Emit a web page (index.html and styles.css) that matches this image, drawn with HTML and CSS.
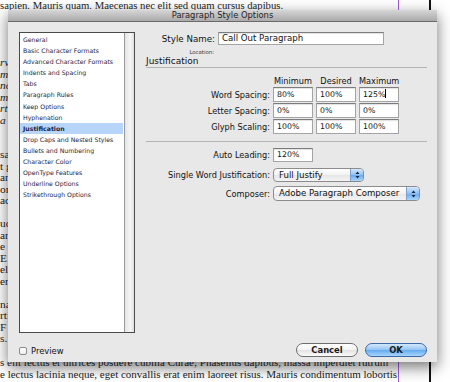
FILE: index.html
```html
<!DOCTYPE html>
<html lang="en">
<head>
    <meta charset="UTF-8">
    <meta name="viewport" content="width=device-width, initial-scale=1.0">
    <title>Paragraph Style Options</title>
    <link rel="stylesheet" href="styles.css">
</head>
<body>
    <div class="page">
        <div class="frame">
            <p class="line first">sapien. Mauris quam. Maecenas nec elit sed quam cursus dapibus.</p>
            <div class="middle">
                <p class="line gap"></p>
                <p class="line gap"></p>
                <p class="line gap"></p>
                <p class="line italic">rv</p>
                <p class="line italic">m,</p>
                <p class="line italic">nc</p>
                <p class="line italic">mi</p>
                <p class="line italic">rt</p>
                <p class="line italic">a l</p>
                <p class="line gap"></p>
                <p class="line gap"></p>
                <p class="line">sa</p>
                <p class="line">t g</p>
                <p class="line">ar</p>
                <p class="line">on</p>
                <p class="line">ac</p>
                <p class="line gap"></p>
                <p class="line">ud</p>
                <p class="line">ar</p>
                <p class="line">e</p>
                <p class="line">E</p>
                <p class="line">el</p>
                <p class="line">en</p>
                <p class="line gap"></p>
                <p class="line">na</p>
                <p class="line">rti</p>
                <p class="line">F</p>
                <p class="line">s.</p>
            </div>
            <div class="bottom">
                <p class="line">s elit lectus et ultrices posuere cubilia Curae; Phasellus dapibus, massa imperdiet rutrum</p>
                <p class="line">e lectus lacinia neque, eget convallis erat enim laoreet risus. Mauris condimentum lobortis</p>
            </div>
        </div>
    </div>

    <div class="dialog">
        <div class="titlebar">Paragraph Style Options</div>
        <div class="dialog-body">
            <div class="list-box">
                <ul class="list">
                    <li>General</li>
                    <li>Basic Character Formats</li>
                    <li>Advanced Character Formats</li>
                    <li>Indents and Spacing</li>
                    <li>Tabs</li>
                    <li>Paragraph Rules</li>
                    <li>Keep Options</li>
                    <li>Hyphenation</li>
                    <li class="selected">Justification</li>
                    <li>Drop Caps and Nested Styles</li>
                    <li>Bullets and Numbering</li>
                    <li>Character Color</li>
                    <li>OpenType Features</li>
                    <li>Underline Options</li>
                    <li>Strikethrough Options</li>
                </ul>
                <div class="scroll-track"></div>
            </div>

            <div class="panel">
                <div class="name-row">
                    <label class="name-label">Style Name:</label>
                    <div class="field name-field">Call Out Paragraph</div>
                </div>
                <div class="location">Location:</div>
                <div class="section-title">Justification</div>

                <div class="grid-row header-row">
                    <span class="row-label"></span>
                    <span class="col-head">Minimum</span>
                    <span class="col-head">Desired</span>
                    <span class="col-head">Maximum</span>
                </div>
                <div class="grid-row">
                    <label class="row-label">Word Spacing:</label>
                    <div class="field cell">80%</div>
                    <div class="field cell">100%</div>
                    <div class="field cell">125%<span class="caret"></span></div>
                </div>
                <div class="grid-row">
                    <label class="row-label">Letter Spacing:</label>
                    <div class="field cell">0%</div>
                    <div class="field cell">0%</div>
                    <div class="field cell">0%</div>
                </div>
                <div class="grid-row">
                    <label class="row-label">Glyph Scaling:</label>
                    <div class="field cell">100%</div>
                    <div class="field cell">100%</div>
                    <div class="field cell">100%</div>
                </div>

                <div class="divider"></div>

                <div class="grid-row leading-row">
                    <label class="row-label">Auto Leading:</label>
                    <div class="field cell">120%</div>
                </div>
                <div class="grid-row popup-row">
                    <label class="row-label">Single Word Justification:</label>
                    <div class="popup popup-short">
                        <span class="popup-text">Full Justify</span>
                        <span class="stepper">
                            <svg width="5" height="8" viewBox="0 0 5 8"><path d="M2.5 0.5 L4.5 3 L0.5 3 Z M0.5 5 L4.5 5 L2.5 7.5 Z" fill="#1b2a44"/></svg>
                        </span>
                    </div>
                </div>
                <div class="grid-row popup-row composer-row">
                    <label class="row-label">Composer:</label>
                    <div class="popup popup-long">
                        <span class="popup-text">Adobe Paragraph Composer</span>
                        <span class="stepper">
                            <svg width="5" height="8" viewBox="0 0 5 8"><path d="M2.5 0.5 L4.5 3 L0.5 3 Z M0.5 5 L4.5 5 L2.5 7.5 Z" fill="#1b2a44"/></svg>
                        </span>
                    </div>
                </div>
            </div>
        </div>

        <div class="dialog-footer">
            <label class="preview">
                <span class="checkbox"></span>
                Preview
            </label>
            <div class="buttons">
                <button class="btn cancel">Cancel</button>
                <button class="btn ok">OK</button>
            </div>
        </div>
    </div>
</body>
</html>
```

FILE: styles.css
```css
/* page behind the dialog */
body {
    margin: 0;
    width: 450px;
    height: 382px;
    overflow: hidden;
    background: #fff;
    position: relative;
    font-family: "DejaVu Sans", "Liberation Sans", sans-serif;
}
.page {
    width: 429px;
    height: 382px;
    border-right: 2px solid #111;
}
.frame {
    width: 398px;
    height: 382px;
    border-right: 1px solid #a55cdc;
    display: flex;
    flex-direction: column;
    justify-content: space-between;
    overflow: hidden;
}
.line {
    margin: 0;
    height: 11.5px;
    font-family: "Liberation Serif", "Times New Roman", serif;
    font-size: 11.4px;
    line-height: 11.5px;
    color: #1e1e1e;
    white-space: nowrap;
}
.line.first {
    font-size: 10.7px;
}
.line.italic {
    font-style: italic;
}
.bottom .line {
    height: 12px;
    line-height: 12px;
    font-size: 11px;
}
.bottom {
    padding-bottom: 2px;
}

/* dialog window */
.dialog {
    position: absolute;
    left: 8px;
    top: 10px;
    width: 429px;
    height: 352px;
    background: #e8e8e8;
    box-shadow: 0 5px 14px rgba(0, 0, 0, 0.55);
    display: flex;
    flex-direction: column;
    color: #111;
}
.titlebar {
    height: 11px;
    line-height: 11px;
    text-align: center;
    font-size: 8.4px;
    color: #222;
    background: linear-gradient(#d6d6d6, #aaaaaa);
    border-bottom: 1px solid #6a6a6a;
}
.dialog-body {
    display: flex;
    gap: 11px;
    padding: 10px 10px 0 11px;
}

/* category list */
.list-box {
    width: 114px;
    height: 299px;
    border: 1px solid #4a4a4a;
    display: flex;
    background: #fff;
}
.list {
    flex: 1;
    margin: 0;
    padding: 1px 1px 0 0;
    list-style: none;
}
.list li {
    height: 11.1px;
    line-height: 11.1px;
    font-size: 6.2px;
    padding-left: 3px;
    color: #1c2440;
    white-space: nowrap;
}
.list li.selected {
    background: #b7d5fb;
    font-weight: bold;
}
.scroll-track {
    width: 9px;
    border-left: 1px solid #9a9a9a;
    background: linear-gradient(90deg, #e4e4e4, #f6f6f6 60%, #e0e0e0);
}

/* right panel */
.panel {
    width: 281px;
    display: flex;
    flex-direction: column;
    font-size: 8.2px;
}
.name-row {
    display: flex;
    align-items: center;
    gap: 3px;
    height: 13px;
}
.name-label {
    width: 69px;
    text-align: right;
    font-size: 8.7px;
}
.field {
    box-sizing: border-box;
    background: #fff;
    border: 1px solid #a4a4a4;
    border-top-color: #7c7c7c;
    box-shadow: inset 0 1px 1px rgba(0, 0, 0, 0.12);
    padding-left: 3px;
    white-space: nowrap;
}
.name-field {
    width: 166px;
    height: 13px;
    line-height: 11px;
    font-size: 8.6px;
}
.location {
    width: 68px;
    text-align: right;
    margin-top: 3px;
    height: 8px;
    line-height: 8px;
    font-size: 5.4px;
    color: #333;
}
.section-title {
    height: 11px;
    line-height: 11px;
    font-size: 9px;
    border-bottom: 1px solid #b4b4b4;
}
.grid-row {
    display: flex;
    align-items: center;
    gap: 3px;
    height: 15px;
    margin-top: 1px;
}
.row-label {
    width: 124px;
    text-align: right;
    white-space: nowrap;
}
.header-row {
    height: 10px;
    margin-top: 8px;
}
.col-head {
    width: 40px;
    text-align: center;
}
.cell {
    width: 40px;
    height: 15px;
    line-height: 13px;
    font-size: 7.8px;
}
.caret {
    display: inline-block;
    width: 1px;
    height: 9px;
    background: #000;
    vertical-align: -1px;
}
.divider {
    margin-top: 7px;
    border-top: 1px solid #b4b4b4;
}
.leading-row {
    margin-top: 6px;
    height: 14px;
}
.leading-row .cell {
    height: 14px;
    line-height: 12px;
}
.popup-row {
    margin-top: 6px;
    height: 14px;
}
.composer-row {
    margin-top: 4px;
    height: 15px;
}
.popup {
    box-sizing: border-box;
    height: 100%;
    display: flex;
    border: 1px solid #8c8c8c;
    border-radius: 4px;
    background: linear-gradient(#ffffff, #f2f2f2 50%, #e6e6e6 51%, #f4f4f4);
    overflow: hidden;
}
.popup-short {
    width: 91px;
}
.popup-long {
    width: 147px;
}
.popup-text {
    flex: 1;
    padding-left: 5px;
    font-size: 8.6px;
    line-height: 12px;
    white-space: nowrap;
}
.stepper {
    width: 12px;
    display: flex;
    align-items: center;
    justify-content: center;
    border-left: 1px solid #7f9fc8;
    background: linear-gradient(#d5e8fd, #8ec0f4 50%, #6aaaef 51%, #a9d4fb);
}

/* footer */
.dialog-footer {
    display: flex;
    align-items: center;
    justify-content: space-between;
    margin-top: 10px;
    padding: 0 10px 0 11px;
    height: 14px;
}
.preview {
    display: flex;
    align-items: center;
    gap: 4px;
    font-size: 8.4px;
    margin-top: 1px;
}
.checkbox {
    width: 8px;
    height: 8px;
    border: 1px solid #8a8a8a;
    border-radius: 2px;
    background: linear-gradient(#fff, #ededed);
    box-sizing: border-box;
}
.buttons {
    display: flex;
    gap: 7px;
}
.btn {
    width: 62px;
    height: 14px;
    padding: 0;
    border-radius: 8px;
    font-family: "DejaVu Sans", "Liberation Sans", sans-serif;
    font-size: 8.4px;
    font-weight: bold;
    color: #1a1a1a;
    line-height: 12px;
}
.cancel {
    border: 1px solid #6e6e6e;
    background: linear-gradient(#ffffff, #f4f4f4 50%, #e2e2e2 51%, #fbfbfb);
}
.ok {
    border: 1px solid #3b6aa6;
    background: linear-gradient(#d3e8fc, #93c4f4 50%, #64a9ef 51%, #a8d6fc);
}
```
